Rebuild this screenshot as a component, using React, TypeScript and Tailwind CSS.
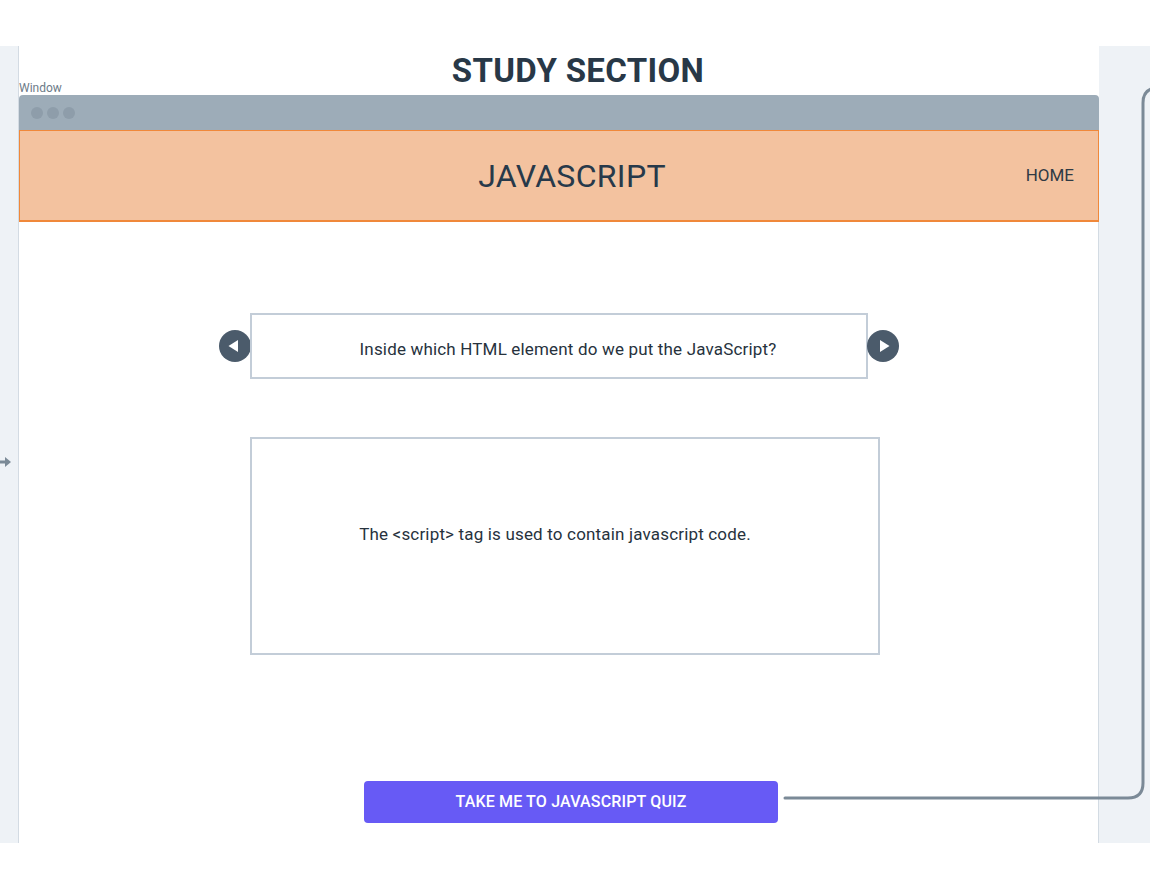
import React from 'react';

const Arrow = ({ dir }: { dir: 'left' | 'right' }) => (
  <div className="w-8 h-8 rounded-full bg-[#4b5b6b] shrink-0">
    <svg width="32" height="32" viewBox="0 0 32 32">
      {dir === 'left' ? (
        <polygon points="19,10 19,22 9.5,16" fill="#fff" />
      ) : (
        <polygon points="13,10 13,22 22.5,16" fill="#fff" />
      )}
    </svg>
  </div>
);

const App: React.FC = () => {
  return (
    <div className="relative w-[1150px] h-[891px] bg-white overflow-hidden text-[#2a3846]" style={{ fontFamily: 'Roboto, "Noto Sans", sans-serif' }}>
      <div className="h-[46px]" />
      <div className="flex h-[797px]">
        {/* left strip */}
        <div className="w-[19px] bg-[#eef2f6] border-r border-[#d3dbe3]" />

        {/* canvas */}
        <div className="w-[1080px] flex flex-col">
          <h1 className="text-center text-[33px] font-bold leading-none tracking-[0.01em] text-[#283847] mt-[8px] h-[28px] pl-[38px]">
            STUDY SECTION
          </h1>
          <div className="text-[12px] leading-none text-[#6d7b88] h-[11px]">Window</div>

          {/* window */}
          <div className="mt-[2px] flex-1 flex flex-col">
            <div className="h-[35px] bg-[#9dacb8] rounded-t-[4px] flex items-center gap-[4px] pl-[12px]">
              <span className="w-[12px] h-[12px] rounded-full bg-[#8e9daa]" />
              <span className="w-[12px] h-[12px] rounded-full bg-[#8e9daa]" />
              <span className="w-[12px] h-[12px] rounded-full bg-[#8e9daa]" />
            </div>
            <div className="relative h-[92px] bg-[#f3c29f] border border-[#f0883a] border-b-2 flex items-center justify-center">
              <span className="text-[32px] leading-none font-normal tracking-[0.01em] text-[#27394a] ml-[26px]">JAVASCRIPT</span>
              <span className="absolute right-[24px] top-[36px] text-[17px] leading-none text-[#2f3a44]">HOME</span>
            </div>

            <div className="flex-1 bg-white border-r border-[#d3dbe3] flex flex-col">
              {/* question row */}
              <div className="mt-[91px] flex items-center pl-[200px]">
                <Arrow dir="left" />
                <div className="-ml-[1px] w-[618px] h-[66px] border-2 border-[#c3cdd8] flex items-center justify-center text-[17px] tracking-[0.01em] text-[#27323d]">
                  <span className="ml-[18px] mt-[8px]">Inside which HTML element do we put the JavaScript?</span>
                </div>
                <div className="-ml-[1px]">
                  <Arrow dir="right" />
                </div>
              </div>

              {/* answer */}
              <div className="mt-[58px] ml-[231px] w-[630px] h-[218px] border-2 border-[#c3cdd8] flex items-center justify-center text-[17px] tracking-[0.01em] text-[#27323d]">
                <span className="-mt-[22px] -ml-[20px]">The &lt;script&gt; tag is used to contain javascript code.</span>
              </div>

              {/* button */}
              <div className="mt-[126px] ml-[345px]">
                <button className="w-[414px] h-[42px] rounded-[4px] bg-[#675af5] text-white text-[16px] font-medium tracking-[0.01em]">
                  TAKE ME TO JAVASCRIPT QUIZ
                </button>
              </div>
            </div>
          </div>
        </div>

        {/* right strip */}
        <div className="flex-1 bg-[#eef2f6]" />
      </div>

      {/* connectors */}
      <svg className="absolute inset-0 pointer-events-none" width="1150" height="891">
        <path d="M785 798 H1128 Q1143 798 1143 783 V103 Q1143 88 1158 88" fill="none" stroke="#7b8a97" strokeWidth="3" strokeLinecap="round" />
        <path d="M0 462 H6" stroke="#7b8a97" strokeWidth="3" />
        <polygon points="5,457 11,462 5,467" fill="#7b8a97" />
      </svg>
    </div>
  );
};

export default App;
